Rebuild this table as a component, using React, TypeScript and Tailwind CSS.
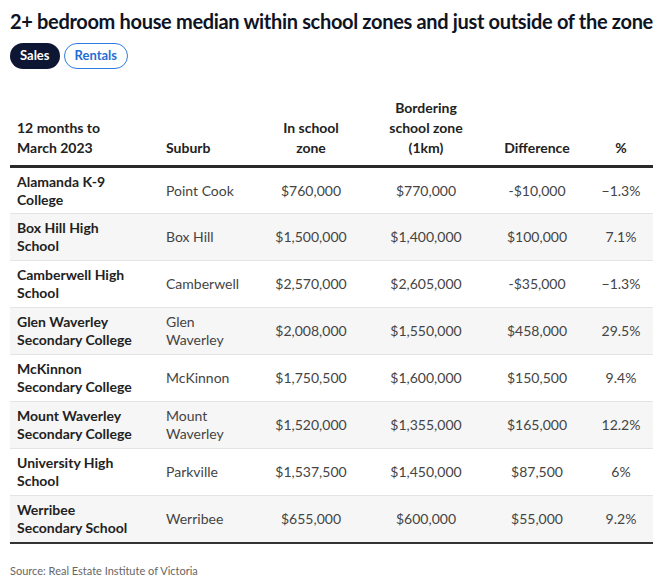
const rows = [
  [["Alamanda K-9", "College"], ["Point Cook"], "$760,000", "$770,000", "-$10,000", "\u22121.3%"],
  [["Box Hill High", "School"], ["Box Hill"], "$1,500,000", "$1,400,000", "$100,000", "7.1%"],
  [["Camberwell High", "School"], ["Camberwell"], "$2,570,000", "$2,605,000", "-$35,000", "\u22121.3%"],
  [["Glen Waverley", "Secondary College"], ["Glen", "Waverley"], "$2,008,000", "$1,550,000", "$458,000", "29.5%"],
  [["McKinnon", "Secondary College"], ["McKinnon"], "$1,750,500", "$1,600,000", "$150,500", "9.4%"],
  [["Mount Waverley", "Secondary College"], ["Mount", "Waverley"], "$1,520,000", "$1,355,000", "$165,000", "12.2%"],
  [["University High", "School"], ["Parkville"], "$1,537,500", "$1,450,000", "$87,500", "6%"],
  [["Werribee", "Secondary School"], ["Werribee"], "$655,000", "$600,000", "$55,000", "9.2%"],
] as const;

function Lines({ parts }: { parts: readonly string[] }) {
  return (
    <>
      {parts.map((p, i) => (
        <span key={i} className="block whitespace-nowrap">{p}</span>
      ))}
    </>
  );
}

export default function App() {
  return (
    <div className="w-[667px] h-[581px] bg-white px-[10px] pt-[9px] font-['Lato',sans-serif] text-[#1c1c28]">
      <h1 className="text-[20px] leading-[24px] font-bold tracking-[-0.33px] whitespace-nowrap text-[#0f1424]">
        2+ bedroom house median within school zones and just outside of the zone
      </h1>
      <div className="flex gap-[4px] mt-[10px]">
        <button className="h-[26px] px-[10px] rounded-full bg-[#0d1632] text-white text-[13px] font-bold">Sales</button>
        <button className="h-[26px] px-[10px] rounded-full border border-[#2f7be0] text-[#1f6fd6] text-[13px] font-bold">Rentals</button>
      </div>
      <table className="mt-[29px] w-[643px] table-fixed border-collapse text-[14px] leading-[18px]">
        <colgroup>
          <col className="w-[149px]" />
          <col className="w-[96px]" />
          <col className="w-[112px]" />
          <col className="w-[118px]" />
          <col className="w-[104px]" />
          <col className="w-[64px]" />
        </colgroup>
        <thead>
          <tr className="border-b-[3px] border-[#2a2a2a] font-bold text-[#222] leading-[20px]">
            <th className="text-left align-bottom px-[7px] pb-[7px]">12 months to<br />March 2023</th>
            <th className="text-left align-bottom px-[7px] pb-[7px]">Suburb</th>
            <th className="text-center align-bottom px-[7px] pb-[7px]">In school<br />zone</th>
            <th className="text-center align-bottom px-[7px] pb-[7px]">Bordering<br />school zone<br />(1km)</th>
            <th className="text-center align-bottom px-[7px] pb-[7px]">Difference</th>
            <th className="text-center align-bottom px-[7px] pb-[7px]">%</th>
          </tr>
        </thead>
        <tbody>
          {rows.map((r, i) => (
            <tr
              key={r[0][0]}
              className={`${i % 2 === 1 ? "bg-[#f6f6f6]" : "bg-white"} ${i === rows.length - 1 ? "border-b-2 border-[#333]" : "border-b border-[#e4e4e4]"}`}
            >
              <td className="h-[47px] px-[7px] font-bold text-[#222]"><Lines parts={r[0]} /></td>
              <td className="px-[7px] text-[#444]"><Lines parts={r[1]} /></td>
              <td className="px-[7px] text-center text-[#444]">{r[2]}</td>
              <td className="px-[7px] text-center text-[#444]">{r[3]}</td>
              <td className="px-[7px] text-center text-[#444]">{r[4]}</td>
              <td className="px-[7px] text-center text-[#444]">{r[5]}</td>
            </tr>
          ))}
        </tbody>
      </table>
      <p className="mt-[19px] text-[11px] text-[#666]">Source: Real Estate Institute of Victoria</p>
    </div>
  );
}
